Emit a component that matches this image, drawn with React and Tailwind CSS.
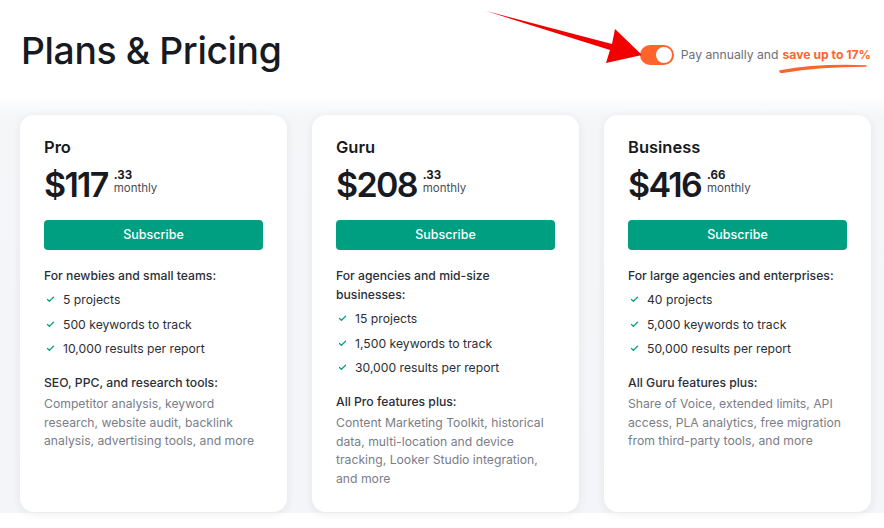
import { Check } from "lucide-react";

const plans = [
  {
    name: "Pro",
    price: "$117",
    cents: ".33",
    audience: "For newbies and small teams:",
    features: ["5 projects", "500 keywords to track", "10,000 results per report"],
    extraTitle: "SEO, PPC, and research tools:",
    extra:
      "Competitor analysis, keyword research, website audit, backlink analysis, advertising tools, and more",
  },
  {
    name: "Guru",
    price: "$208",
    cents: ".33",
    audience: "For agencies and mid-size businesses:",
    features: ["15 projects", "1,500 keywords to track", "30,000 results per report"],
    extraTitle: "All Pro features plus:",
    extra:
      "Content Marketing Toolkit, historical data, multi-location and device tracking, Looker Studio integration, and more",
  },
  {
    name: "Business",
    price: "$416",
    cents: ".66",
    audience: "For large agencies and enterprises:",
    features: ["40 projects", "5,000 keywords to track", "50,000 results per report"],
    extraTitle: "All Guru features plus:",
    extra:
      "Share of Voice, extended limits, API access, PLA analytics, free migration from third-party tools, and more",
  },
];

const PlanCard = ({ plan }) => {
  return (
    <div className="flex h-[397px] w-[267px] shrink-0 flex-col rounded-[14px] bg-white px-6 pt-[21px] shadow-[0_2px_10px_rgba(20,24,40,0.07)]">
      <h2 className="text-[16.5px] font-semibold leading-[22px] text-[#171a22]">{plan.name}</h2>
      <div className="mt-[6px] flex items-start">
        <span className="text-[34px] font-semibold leading-[42px] tracking-[-0.05em] text-[#171a22]">
          {plan.price}
        </span>
        <div className="ml-[6px] mt-[5px] flex flex-col">
          <span className="text-[11.5px] font-bold leading-[12px] text-[#171a22]">{plan.cents}</span>
          <span className="mt-[1px] text-[11.5px] leading-[13px] text-[#4a4d57]">monthly</span>
        </div>
      </div>
      <button className="mt-[14px] h-[30px] w-full shrink-0 rounded-[4px] bg-[#009f81] text-[12.5px] font-medium text-white">
        Subscribe
      </button>
      <p className="mt-[16px] text-[12.2px] font-medium leading-[19px] text-[#2b2e38]">{plan.audience}</p>
      <ul className="mt-[5px] flex flex-col gap-[5.5px]">
        {plan.features.map((f) => (
          <li key={f} className="flex items-center text-[12.2px] leading-[19px] text-[#2b2e38]">
            <Check className="ml-[2px] mr-[8px] h-[9px] w-[9px] text-[#009f81]" strokeWidth={3.5} />
            {f}
          </li>
        ))}
      </ul>
      <p className="mt-[15px] text-[12.2px] font-medium leading-[19px] text-[#2b2e38]">{plan.extraTitle}</p>
      <p className="mt-[3px] text-[12.2px] leading-[18.5px] text-[#7a7d88]">{plan.extra}</p>
    </div>
  );
};

const App = () => {
  return (
    <div
      className="relative h-[528px] w-[884px] overflow-hidden bg-white"
      style={{ fontFamily: "Inter, 'Noto Sans', sans-serif" }}
    >
      <header className="flex h-[95px] items-start justify-between pl-[21px] pr-[13px]">
        <h1 className="mt-[28px] text-[37.3px] font-medium leading-[46px] tracking-[-0.01em] text-[#171a22]">
          Plans &amp; Pricing
        </h1>
        <div className="mt-[45px] flex items-center">
          <div className="relative h-[20px] w-[34px] rounded-full bg-[#ff642d]">
            <div className="absolute right-[2px] top-[2px] h-[16px] w-[16px] rounded-full bg-white" />
          </div>
          <span className="ml-[7px] text-[12.2px] text-[#6c6f7a]">Pay annually and</span>
          <span className="relative ml-[4px] text-[12.2px] font-bold text-[#ff642d]">
            save up to 17%
            <svg className="absolute left-[-4px] top-[17px]" width="94" height="10" viewBox="0 0 94 10">
              <path d="M2 8 Q 40 1 88 3 Q 40 3 3 9.5 Z" fill="#ff642d" stroke="#ff642d" strokeWidth="1.6" strokeLinejoin="round" />
            </svg>
          </span>
        </div>
      </header>

      <svg className="absolute left-0 top-0" width="884" height="100" viewBox="0 0 884 100">
        <polygon points="486,11 612,44 615,29 642,55 606,63 610,50" fill="#f20000" />
      </svg>

      <section className="flex h-[418px] gap-[25px] bg-[linear-gradient(to_bottom,#ffffff_0px,#f5f6f8_22px,#f4f5f8_100%)] pl-5 pt-5">
        {plans.map((p) => (
          <PlanCard key={p.name} plan={p} />
        ))}
      </section>
    </div>
  );
};

export default App;
